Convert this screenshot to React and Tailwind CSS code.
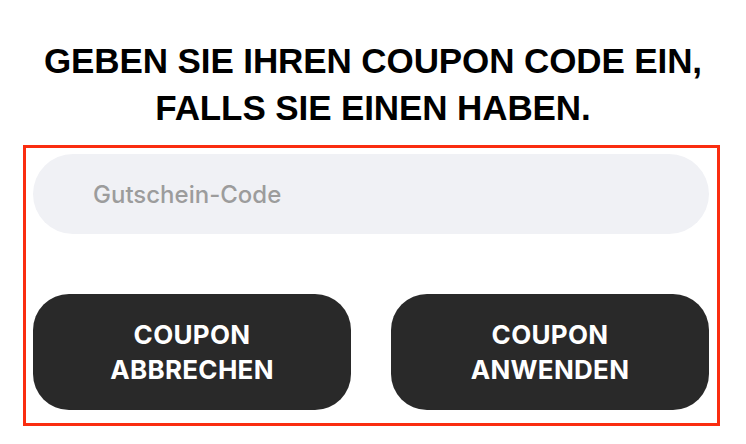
export default function App() {
  return (
    <div className="w-[746px] h-[444px] bg-white overflow-hidden">
      <h2 className="pt-[37px] text-center font-['Liberation_Sans',Arial,sans-serif] font-bold text-[35px] leading-[47px] text-black tracking-[-0.1px]">
        GEBEN SIE IHREN COUPON CODE EIN,
        <br />
        FALLS SIE EINEN HABEN.
      </h2>
      <div className="ml-[23px] mt-[14px] w-[697px] border-[3px] border-[#fa2d10] pt-[6px] pl-[7px] pr-[8px] pb-[13px] font-['Inter',sans-serif]">
        <input
          type="text"
          placeholder="Gutschein-Code"
          className="w-full h-[80px] rounded-full bg-[#f0f1f5] pl-[60px] text-[24px] font-medium text-[#333] placeholder:text-[#9c9c9c] outline-none"
        />
        <div className="mt-[60px] flex gap-[40px]">
          <button className="w-[318px] h-[116px] rounded-[36px] bg-[#292929] text-white text-[26px] font-bold leading-[35px] tracking-[0.3px]">
            COUPON
            <br />
            ABBRECHEN
          </button>
          <button className="w-[318px] h-[116px] rounded-[36px] bg-[#292929] text-white text-[26px] font-bold leading-[35px] tracking-[0.3px]">
            COUPON
            <br />
            ANWENDEN
          </button>
        </div>
      </div>
    </div>
  );
}
